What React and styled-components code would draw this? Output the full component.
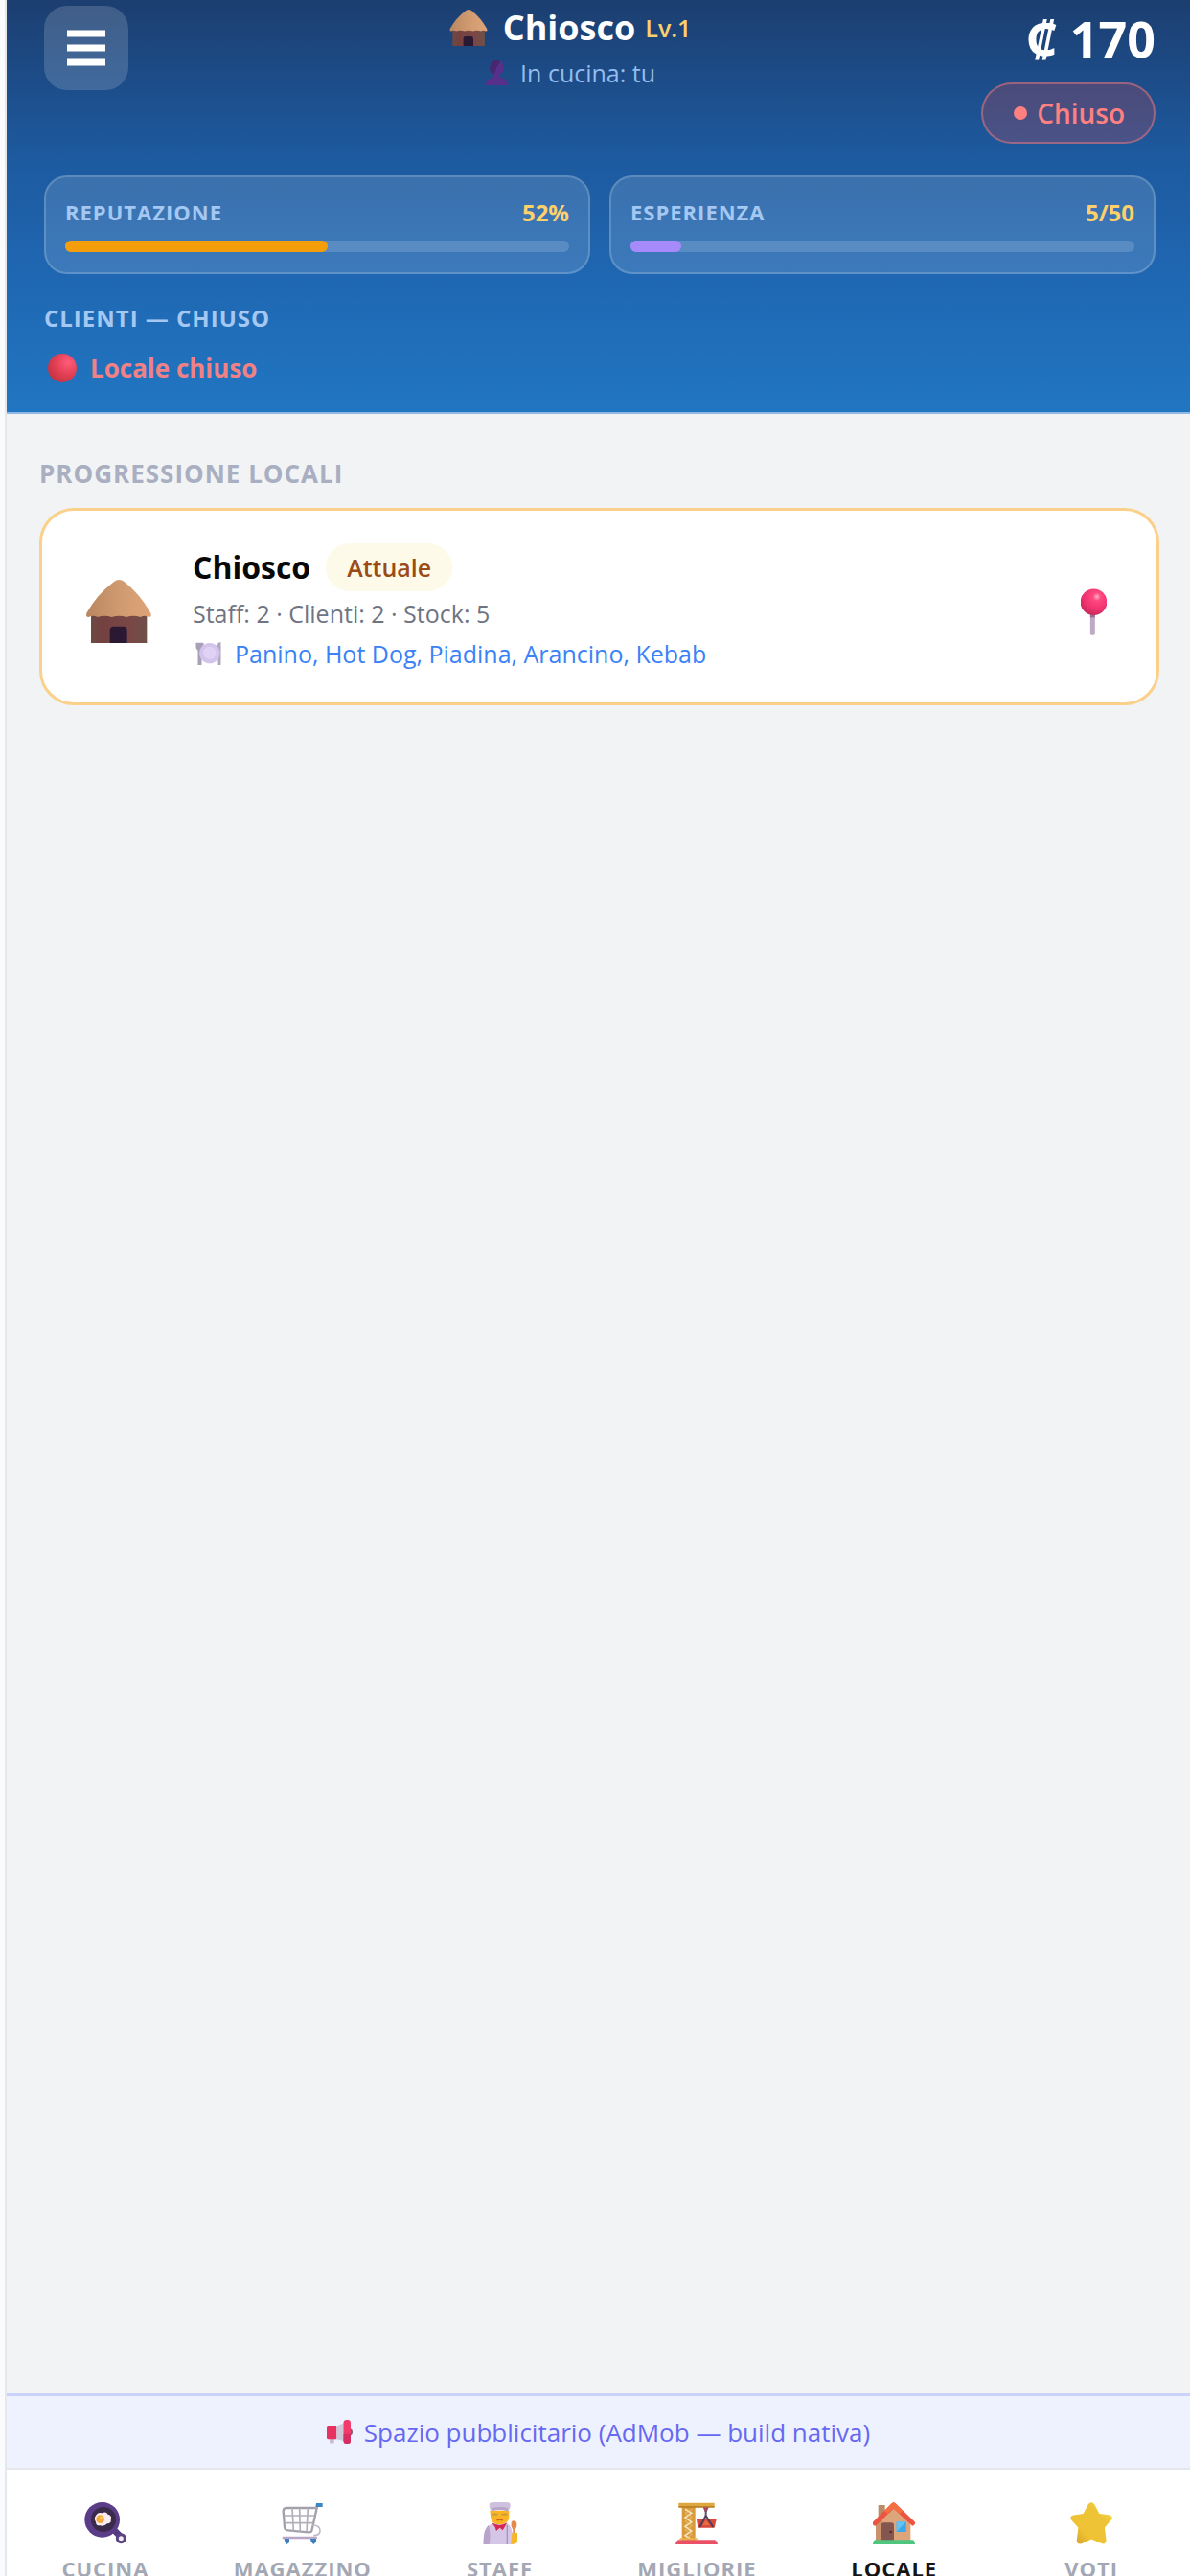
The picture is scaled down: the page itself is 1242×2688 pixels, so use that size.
import React, { useState } from 'react';
import styled, { createGlobalStyle } from 'styled-components';

const GlobalStyle = createGlobalStyle`
* {
    box-sizing: border-box;
}
body {
    margin: 0;
    background: #fafbfd;
    font-family: "Open Sans", "Noto Sans", sans-serif;
}
button {
    font-family: inherit;
    border: 0;
    padding: 0;
    cursor: pointer;
}
`;

function HutIcon() {
    return (
        <svg viewBox="0 0 204 198" aria-hidden="true">
            <defs>
                <linearGradient id="roof" x1="0" y1="0" x2="1" y2="0">
                    <stop offset="0" stopColor="#b98660" />
                    <stop offset="0.5" stopColor="#cf9a70" />
                    <stop offset="1" stopColor="#dfa478" />
                </linearGradient>
                <linearGradient id="wall" x1="0" y1="0" x2="1" y2="0">
                    <stop offset="0" stopColor="#6e4a44" />
                    <stop offset="0.2" stopColor="#73413f" />
                    <stop offset="0.7" stopColor="#7a4746" />
                    <stop offset="1" stopColor="#6e5048" />
                </linearGradient>
            </defs>
            <rect x="15" y="100" width="175" height="98" fill="url(#wall)" />
            <path d="M74 198V158Q74 146 86 146H116Q128 146 128 158V198Z" fill="#2b1934" />
            <path d="M86 7Q103-7 120 7Q168 45 201 103Q208 118 196 117Q182 110 170 117Q148 109 126 117Q104 110 80 117Q58 109 36 117Q20 110 8 117Q-4 118 2 103Q34 46 86 7Z" fill="url(#roof)" />
        </svg>
    );
}

function PersonIcon() {
    return (
        <svg viewBox="0 0 74 80" aria-hidden="true">
            <path d="M0 80Q2 58 27 54L28 44Q15 40 15 26Q12 22 17 18Q16 0 37 0Q58 0 57 18Q62 22 59 26Q58 40 46 44L47 54Q72 58 74 80Z" fill="#56308a" />
            <path d="M17 18Q16 0 37 0Q44 0 48 4Q36 20 28 44Q15 40 15 26Q12 22 17 18Z" fill="#45286d" />
        </svg>
    );
}

function RedBallIcon() {
    return (
        <svg viewBox="0 0 30 30" aria-hidden="true">
            <defs>
                <radialGradient id="ball" cx="0.7" cy="0.3" r="0.8">
                    <stop offset="0" stopColor="#ff5c7c" />
                    <stop offset="0.45" stopColor="#e8445a" />
                    <stop offset="1" stopColor="#c4313f" />
                </radialGradient>
            </defs>
            <circle cx="15" cy="15" r="15" fill="url(#ball)" />
        </svg>
    );
}

function PlateIcon() {
    return (
        <svg viewBox="0 0 80 72" aria-hidden="true">
            <path d="M1 2H25V18Q22 24 19 26V72H7V26Q1 24 1 16Z" fill="#a9a0b8" />
            <path d="M68 6Q72 0 79 0V72H70V44H64Z" fill="#b3a8bd" />
            <circle cx="44" cy="35" r="32" fill="#d3c4ec" />
            <circle cx="44" cy="34" r="20" fill="#dfd2f5" />
        </svg>
    );
}

function PinIcon() {
    return (
        <svg viewBox="0 0 82 148" aria-hidden="true">
            <defs>
                <radialGradient id="pin" cx="0.62" cy="0.3" r="0.75">
                    <stop offset="0" stopColor="#ffb3cb" />
                    <stop offset="0.2" stopColor="#ff4880" />
                    <stop offset="0.65" stopColor="#ef3270" />
                    <stop offset="1" stopColor="#c02a56" />
                </radialGradient>
            </defs>
            <rect x="30" y="78" width="15" height="70" rx="6" fill="#bcaac6" />
            <rect x="30" y="78" width="15" height="14" fill="#9a6c93" />
            <circle cx="41" cy="43" r="42" fill="url(#pin)" />
        </svg>
    );
}

function MegaphoneIcon() {
    return (
        <svg viewBox="0 0 80 74" aria-hidden="true">
            <path d="M9 54H23V70Q16 77 9 70Z" fill="#c9bcd8" />
            <path d="M30 20L56 8V66L30 60Z" fill="#cfc8d8" />
            <path d="M4 18H30V60H4Q0 60 0 54V24Q0 18 4 18Z" fill="#e83362" />
            <path d="M72 28Q80 28 80 38Q80 48 72 48Z" fill="#7a5d78" />
            <rect x="52" y="0" width="22" height="74" rx="9" fill="#f23a6c" />
            <path d="M52 44H74V65Q74 74 65 74H61Q52 74 52 65Z" fill="#d62e62" />
        </svg>
    );
}

function PanIcon() {
    return (
        <svg viewBox="0 0 132 132" aria-hidden="true">
            <path d="M88 82L112 106" stroke="#553a80" strokeWidth="20" strokeLinecap="round" />
            <circle cx="115" cy="113" r="12" fill="#efeaf4" stroke="#5b4382" strokeWidth="9" />
            <circle cx="56" cy="55" r="55" fill="#5a3c88" />
            <circle cx="60" cy="54" r="39" fill="#3a2b4b" />
            <path d="M36 42Q42 30 56 34Q68 28 74 38Q88 42 83 53Q86 66 72 67Q62 77 49 73Q36 74 36 62Q29 50 36 42Z" fill="#fbeef2" />
            <circle cx="50" cy="53" r="13" fill="#f6a83c" />
            <circle cx="53" cy="49" r="5" fill="#fcc765" />
        </svg>
    );
}

function CartIcon() {
    return (
        <svg viewBox="0 0 132 132" fill="none" aria-hidden="true">
            <path d="M112 10L94 90Q92 95 84 94L20 88Q10 88 9 78L5 28Q5 18 16 18H106" stroke="#a4a0ab" strokeWidth="7" />
            <path d="M8 42H102M10 65H98M33 18L37 90M56 18L58 92M82 18L78 93" stroke="#b2afb8" strokeWidth="5" />
            <path d="M96 72Q122 72 120 92Q118 104 100 104" stroke="#bdb6c5" strokeWidth="5" />
            <path d="M5 111H108" stroke="#b9a5c6" strokeWidth="7" strokeLinecap="round" />
            <path d="M108 3H128V15H106Z" fill="#3f86c4" />
            <path d="M8 114H24V126L16 132L10 124ZM90 114H108V124L100 132L92 124Z" fill="#3c7fc6" />
        </svg>
    );
}

function ChefIcon() {
    return (
        <svg viewBox="0 0 132 132" aria-hidden="true">
            <path d="M14 132Q12 70 48 66H84Q108 70 106 132Z" fill="#d5c5e6" />
            <path d="M14 132Q12 84 30 72Q38 100 32 132Z" fill="#b8a4cb" />
            <path d="M88 72V132" stroke="#a892bd" strokeWidth="4" />
            <path d="M34 26H94V46Q92 70 64 70Q38 70 36 46Z" fill="#fbb524" />
            <path d="M40 38H58M70 38H88" stroke="#c29a40" strokeWidth="5" />
            <path d="M56 57Q64 50 74 57" stroke="#d4601f" strokeWidth="5" fill="none" />
            <path d="M34 2Q66-4 96 2Q102 12 92 28Q64 20 38 28Q28 12 34 2Z" fill="#cfc0df" />
            <path d="M42 18Q64 12 90 18V28Q64 20 38 28Z" fill="#b6a5c9" />
            <path d="M40 64Q64 80 88 64L80 78L74 88L65 80L54 90L50 78Z" fill="#d3284f" />
            <path d="M101 62Q108 54 117 62Q121 76 112 86V100H106V86Q98 74 101 62Z" fill="#e58a4c" />
            <path d="M103 96H120V124Q116 132 100 132Z" fill="#f6b62c" />
        </svg>
    );
}

function CraneIcon() {
    return (
        <svg viewBox="0 0 132 132" aria-hidden="true">
            <rect x="20" y="8" width="42" height="112" fill="#d99a3a" />
            <path d="M30 22L50 34L30 48L50 62L30 76L50 90L30 104L50 116" stroke="#f7e4bd" strokeWidth="5" fill="none" />
            <path d="M30 116L52 100L30 88L52 74L30 60L52 46L30 34L52 22" stroke="#eccb8e" strokeWidth="2" fill="none" />
            <path d="M10 2H122V16H10Z" fill="#dfa83f" />
            <path d="M10 12H122V17H10Z" fill="#b98326" />
            <path d="M86 16H104L98 30H92Z" fill="#a8485e" />
            <path d="M95 26V42" stroke="#595469" strokeWidth="6" />
            <path d="M66 54H128L122 80H70Z" fill="#d8483b" />
            <path d="M95 42L76 78M95 42L118 78" stroke="#4f3f57" strokeWidth="6" />
            <path d="M84 72L95 56L108 72Z" fill="#e96c44" />
            <path d="M10 118H122Q130 120 132 132H0Q2 120 10 118Z" fill="#ea5167" />
            <path d="M16 112H68V118H10Z" fill="#eab04a" />
        </svg>
    );
}

function HouseIcon() {
    return (
        <svg viewBox="0 0 132 132" aria-hidden="true">
            <rect x="17" y="9" width="21" height="40" fill="#bd8a66" />
            <path d="M9 62L65 12L118 62V120H9Z" fill="#dda579" />
            <path d="M9 62L30 44V120H9Z" fill="#c8936d" />
            <path d="M26 120V72Q26 64 34 64H58Q66 64 66 72V120Z" fill="#855650" />
            <circle cx="56" cy="93" r="4" fill="#4e2d31" />
            <rect x="74" y="61" width="30" height="32" fill="#3aa8ee" />
            <path d="M74 61H104L74 93Z" fill="#62c3f5" />
            <path d="M0 62L59 4Q65-2 71 4L132 62Q134 72 124 74L65 20L8 74Q-2 74 0 62Z" fill="#ec5340" />
            <path d="M59 4Q65-2 71 4L94 27L84 36L65 19L46 36L36 27Z" fill="#f47044" />
            <path d="M7 118H125Q131 120 132 132H0Q1 120 7 118Z" fill="#4ec67d" />
        </svg>
    );
}

function StarIcon() {
    return (
        <svg viewBox="0 0 134 136" aria-hidden="true">
            <defs>
                <linearGradient id="star" x1="0" y1="1" x2="1" y2="0">
                    <stop offset="0" stopColor="#cf9a2b" />
                    <stop offset="0.3" stopColor="#efc233" />
                    <stop offset="0.7" stopColor="#edc437" />
                    <stop offset="1" stopColor="#ffe548" />
                </linearGradient>
            </defs>
            <path d="M57 7Q67-6 77 7L93 37L124 41Q140 46 131 58L110 82L115 122Q114 138 100 133L67 119L36 134Q20 137 20 122L25 82L3 58Q-5 45 10 42L41 37Z" fill="url(#star)" />
        </svg>
    );
}

const tabs = [
    { id: "cucina", label: "CUCINA", Icon: PanIcon },
    { id: "magazzino", label: "MAGAZZINO", Icon: CartIcon },
    { id: "staff", label: "STAFF", Icon: ChefIcon },
    { id: "migliorie", label: "MIGLIORIE", Icon: CraneIcon },
    { id: "locale", label: "LOCALE", Icon: HouseIcon },
    { id: "voti", label: "VOTI", Icon: StarIcon },
];

const stats = [
    { label: "REPUTAZIONE", value: "52%", percent: 52, color: "#f59e0b" },
    { label: "ESPERIENZA", value: "5/50", percent: 10, color: "#a78bfa" },
];

function App() {
    const [active, setActive] = useState("locale");
    return (
        <Page>
            <GlobalStyle />
            <Header>
                <TopRow>
                    <MenuButton type="button" aria-label="Menu">
                        <svg viewBox="0 0 40 40" width="40" height="40" aria-hidden="true">
                            <path d="M0 5H40M0 20H40M0 35H40" stroke="#fff" strokeWidth="7" />
                        </svg>
                    </MenuButton>
                    <Place>
                        <PlaceName>
                            <Icon $w={40} $h={38}><HutIcon /></Icon>
                            <h1>Chiosco</h1>
                            <Level>Lv.1</Level>
                        </PlaceName>
                        <Cook>
                            <Icon $w={25} $h={26}><PersonIcon /></Icon>
                            In cucina: tu
                        </Cook>
                    </Place>
                    <Wallet>
                        <Money>₡ 170</Money>
                        <StatusButton type="button"><Dot />Chiuso</StatusButton>
                    </Wallet>
                </TopRow>
                <Stats>
                    {stats.map(s =>
                        <Stat key={s.label}>
                            <StatHead>
                                <Label $size={22}>{s.label}</Label>
                                <StatValue>{s.value}</StatValue>
                            </StatHead>
                            <Track>
                                <Fill $color={s.color} style={{ width: `${s.percent}%` }} />
                            </Track>
                        </Stat>
                    )}
                </Stats>
                <Label $size={24}>CLIENTI — CHIUSO</Label>
                <Closed>
                    <Icon $w={30} $h={30}><RedBallIcon /></Icon>
                    Locale chiuso
                </Closed>
            </Header>

            <Main>
                <SectionTitle>PROGRESSIONE LOCALI</SectionTitle>
                <Card>
                    <Icon $w={68} $h={66}><HutIcon /></Icon>
                    <CardBody>
                        <CardTitle>
                            <h3>Chiosco</h3>
                            <Badge>Attuale</Badge>
                        </CardTitle>
                        <CardText>Staff: 2 · Clienti: 2 · Stock: 5</CardText>
                        <Menu>
                            <Icon $w={27} $h={24}><PlateIcon /></Icon>
                            Panino, Hot Dog, Piadina, Arancino, Kebab
                        </Menu>
                    </CardBody>
                    <Icon $w={27} $h={49}><PinIcon /></Icon>
                </Card>
            </Main>

            <Ad>
                <Icon $w={27} $h={25}><MegaphoneIcon /></Icon>
                Spazio pubblicitario (AdMob — build nativa)
            </Ad>
            <Nav>
                {tabs.map(({ id, label, Icon: TabIcon }) =>
                    <Tab key={id} type="button" $active={active === id} onClick={() => setActive(id)}>
                        <Icon $w={44} $h={44}><TabIcon /></Icon>
                        {label}
                    </Tab>
                )}
            </Nav>
        </Page>
    )
}

const Page = styled.div`
display:flex;
flex-direction:column;
height:100vh;
margin-left:5px;
border-left:2px solid #e5e7eb;
background:#f1f3f5;
overflow:hidden;
`;
const Header = styled.header`
padding:6px 36px 26px 39px;
border-bottom:2px solid #8fb9e2;
background:linear-gradient(180deg, #1c3e70 0%, #1d5a9f 38%, #1f66b1 65%, #2176c2 100%);
color:white;
`;
const TopRow = styled.div`
display:flex;
justify-content:space-between;
align-items:flex-start;
`;
const MenuButton = styled.button`
display:flex;
align-items:center;
justify-content:center;
width:88px;
height:88px;
margin-right:32px;
border-radius:24px;
background:rgba(255,255,255,0.16);
`;
const Icon = styled.span`
display:flex;
flex:none;
width:${p => p.$w}px;
height:${p => p.$h}px;
svg{
    width:100%;
    height:100%;
}
`;
const Place = styled.div`
display:flex;
flex-direction:column;
align-items:center;
`;
const PlaceName = styled.div`
display:flex;
align-items:center;
line-height:46px;
h1{
    margin:0 10px 0 16px;
    font-size:36px;
    font-weight:700;
}
`;
const Level = styled.span`
font-size:25px;
font-weight:600;
color:#fcd06a;
`;
const Cook = styled.div`
display:flex;
align-items:center;
gap:12px;
margin-top:8px;
font-size:25px;
line-height:32px;
color:#93bdee;
`;
const Wallet = styled.div`
display:flex;
flex-direction:column;
align-items:flex-end;
`;
const Money = styled.div`
font-size:52px;
font-weight:700;
line-height:68px;
`;
const StatusButton = styled.button`
display:flex;
align-items:center;
gap:10px;
height:64px;
margin-top:12px;
padding:0 30px 0 32px;
border:2px solid rgba(255,128,128,0.45);
border-radius:32px;
background:rgba(239,68,68,0.22);
color:#ff8080;
font-size:28px;
font-weight:600;
`;
const Dot = styled.span`
width:14px;
height:14px;
border-radius:50%;
background:#ff8080;
`;
const Stats = styled.div`
display:grid;
grid-template-columns:1fr 1fr;
gap:20px;
margin:33px 0 30px;
`;
const Stat = styled.div`
padding:20px 20px 21px;
border:2px solid rgba(255,255,255,0.18);
border-radius:24px;
background:rgba(255,255,255,0.13);
`;
const StatHead = styled.div`
display:flex;
justify-content:space-between;
margin-bottom:14px;
`;
const Label = styled.div`
font-size:${p => p.$size}px;
font-weight:700;
line-height:32px;
letter-spacing:1px;
color:#a5c8f2;
`;
const StatValue = styled.div`
font-size:24px;
font-weight:700;
line-height:34px;
height:32px;
color:#fcd06a;
`;
const Track = styled.div`
height:12px;
border-radius:6px;
background:rgba(255,255,255,0.15);
`;
const Fill = styled.div`
height:100%;
border-radius:6px;
background:${p => p.$color};
`;
const Closed = styled.div`
display:flex;
align-items:center;
gap:14px;
margin-top:16px;
padding-left:4px;
font-size:26px;
font-weight:700;
line-height:40px;
color:#f08286;
`;
const Main = styled.main`
flex:1;
padding:44px 32px 0 34px;
`;
const SectionTitle = styled.h2`
margin:0 0 18px;
font-size:26px;
font-weight:700;
line-height:36px;
letter-spacing:1px;
color:#a9aec1;
`;
const Card = styled.div`
display:flex;
align-items:center;
padding:34px 52px 24px 46px;
border:3px solid #fad08a;
border-radius:36px;
background:white;
`;
const CardBody = styled.div`
flex:1;
margin-left:43px;
padding-bottom:6px;
font-size:25px;
line-height:42px;
`;
const CardTitle = styled.div`
display:flex;
align-items:center;
gap:16px;
margin-bottom:2px;
h3{
    margin:0;
    font-size:32px;
    font-weight:700;
    color:#080808;
}
`;
const Badge = styled.span`
padding:0 22px;
border-radius:25px;
background:#fefaea;
color:#9a4b16;
font-weight:600;
line-height:50px;
`;
const CardText = styled.div`
color:#6f7482;
`;
const Menu = styled.div`
display:flex;
align-items:center;
gap:14px;
padding-left:3px;
color:#3b82f6;
`;
const Ad = styled.div`
display:flex;
align-items:center;
justify-content:center;
gap:12px;
height:78px;
border-top:3px solid #c9d3fd;
background:#eef2ff;
color:#6668f2;
font-size:26px;
font-weight:500;
`;
const Nav = styled.nav`
display:grid;
grid-template-columns:repeat(6, minmax(0, 1fr));
height:113px;
border-top:2px solid #e5e7eb;
background:white;
overflow:hidden;
`;
const Tab = styled.button`
display:flex;
flex-direction:column;
align-items:center;
gap:11px;
height:136px;
padding-top:34px;
background:none;
color:${p => p.$active ? "#151515" : "#a3a8b4"};
font-size:22px;
font-weight:700;
line-height:28px;
letter-spacing:1px;
`;
export default App;
